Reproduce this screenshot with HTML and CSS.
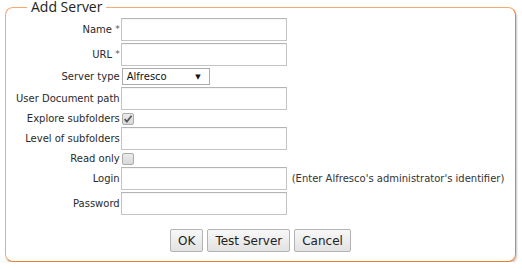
FILE: index.html
```html
<!DOCTYPE html>
<html>
<head>
<meta charset="utf-8">
<link rel="stylesheet" href="styles.css">
</head>
<body>
<div class="page">
  <fieldset class="panel">
    <legend class="panel-title">Add Server</legend>
    <div class="form">
      <label class="lbl">Name <span class="req">*</span></label>
      <input class="txt" type="text">
      <span class="hint"></span>

      <label class="lbl">URL <span class="req">*</span></label>
      <input class="txt" type="text">
      <span class="hint"></span>

      <label class="lbl">Server type</label>
      <div class="select"><span>Alfresco</span><span class="arrow">▼</span></div>
      <span class="hint"></span>

      <label class="lbl">User Document path</label>
      <input class="txt" type="text">
      <span class="hint"></span>

      <label class="lbl">Explore subfolders</label>
      <div class="cell"><span class="check"><svg width="10" height="10" viewBox="0 0 10 10"><path d="M1.6 5.2 L3.9 7.6 L8.6 1.8" fill="none" stroke="#555555" stroke-width="1.7"/></svg></span></div>
      <span class="hint"></span>

      <label class="lbl">Level of subfolders</label>
      <input class="txt" type="text">
      <span class="hint"></span>

      <label class="lbl">Read only</label>
      <div class="cell"><span class="check"></span></div>
      <span class="hint"></span>

      <label class="lbl">Login</label>
      <input class="txt" type="text">
      <span class="hint">(Enter Alfresco's administrator's identifier)</span>

      <label class="lbl">Password</label>
      <input class="txt" type="password">
      <span class="hint"></span>
    </div>
    <div class="actions">
      <button class="btn">OK</button>
      <button class="btn">Test Server</button>
      <button class="btn">Cancel</button>
    </div>
  </fieldset>
</div>
</body>
</html>
```

FILE: styles.css
```css
html, body {
  margin: 0;
  padding: 0;
  background: #ffffff;
}

body {
  font-family: "DejaVu Sans", Verdana, sans-serif;
  font-size: 10px;
  color: #2a2a2a;
}

.page {
  padding: 0 6px 0 5px;
}

.panel {
  margin: 0;
  padding: 4px 10px 9px 10px;
  border: 1px solid;
  border-color: #f7aa70 #ea8236 #e97b2a #f7aa70;
  border-radius: 8px;
  box-shadow: 1px 2px 2px rgba(0, 0, 0, 0.22);
  min-width: 0;
}

.panel-title {
  font-family: "Open Sans", sans-serif;
  font-size: 14px;
  line-height: 14px;
  color: #222222;
  margin-left: 11px;
  padding: 0 4px;
}

.form {
  display: grid;
  grid-template-columns: max-content 166px 1fr;
  column-gap: 1px;
  row-gap: 2px;
  align-items: center;
}

.lbl {
  justify-self: end;
  text-align: right;
  white-space: nowrap;
  line-height: 13px;
}

.req {
  font-size: 9px;
  color: #555555;
  vertical-align: 1px;
}

.txt {
  box-sizing: border-box;
  width: 166px;
  height: 23px;
  margin: 0;
  padding: 0 3px;
  border: 1px solid #c4c4c4;
  border-top-color: #b4b4b4;
  background: #ffffff;
  box-shadow: inset 0 1px 1px rgba(0, 0, 0, 0.04);
  font-family: "DejaVu Sans", sans-serif;
  font-size: 10px;
}

.select {
  box-sizing: border-box;
  width: 88px;
  height: 17px;
  margin-left: 1px;
  border: 1px solid #ababab;
  background: #ffffff;
  display: flex;
  align-items: center;
  justify-content: space-between;
  padding: 0 8px 0 4px;
  color: #111111;
}

.arrow {
  font-size: 7px;
  color: #111111;
}

.cell {
  display: flex;
  align-items: center;
  height: 13px;
}

.check {
  box-sizing: border-box;
  width: 12px;
  height: 12px;
  margin-left: 1px;
  border: 1px solid #ababab;
  border-radius: 2px;
  background: linear-gradient(#ebebeb, #d8d8d8);
  display: flex;
  align-items: center;
  justify-content: center;
}

.check svg {
  display: block;
}

.hint {
  margin-left: 4px;
  white-space: nowrap;
  color: #333333;
}

.actions {
  display: flex;
  justify-content: center;
  gap: 4px;
  margin-top: 14px;
}

.btn {
  box-sizing: border-box;
  height: 23px;
  margin: 0;
  padding: 0 7px;
  border: 1px solid #b3b3b3;
  border-radius: 2px;
  background: linear-gradient(#f8f8f8, #e2e2e2);
  font-family: "DejaVu Sans", sans-serif;
  font-size: 12px;
  color: #222222;
}
```
